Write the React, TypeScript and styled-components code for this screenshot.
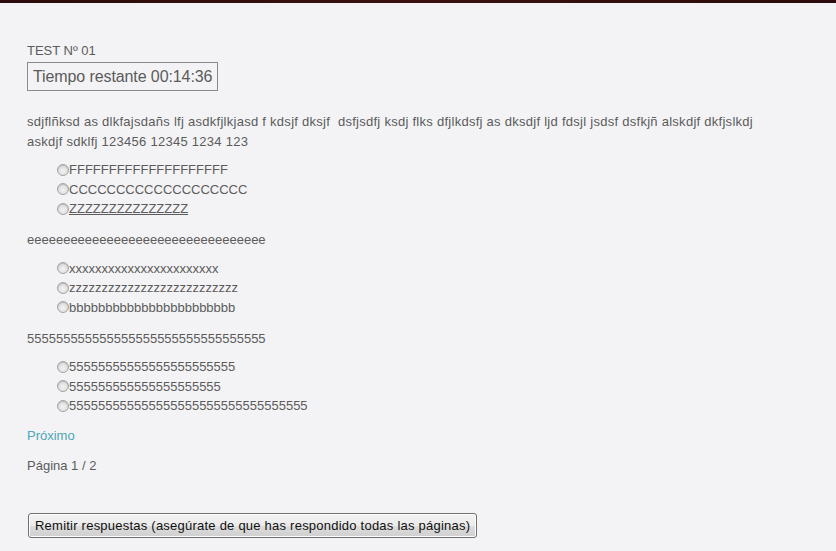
import React from 'react'
import styled, { createGlobalStyle } from 'styled-components'

const GlobalStyle = createGlobalStyle`
  html, body {
    margin: 0;
    padding: 0;
    background: #f3f3f5;
  }
  body {
    font-family: 'Liberation Sans', Arial, sans-serif;
    color: #5b5b5b;
  }
`

const TopBar = styled.div`
  height: 3px;
  background: linear-gradient(90deg, #2b0b0b, #3a1010 50%, #2b0b0b);
`

const Page = styled.div`
  padding: 40px 27px 12px 27px;
  width: 730px;
`

const Title = styled.div`
  font-size: 13px;
  line-height: 15px;
`

const Timer = styled.div`
  display: inline-block;
  margin-top: 4px;
  border: 1px solid #8a8a8a;
  padding: 4px 5px;
  font-size: 16px;
  line-height: 19px;
  letter-spacing: -0.1px;
`

const Question = styled.div<{ $first?: boolean }>`
  margin-top: ${({ $first }) => ($first ? '21px' : '11.5px')};
`

const Statement = styled.p<{ $spacing?: number }>`
  margin: 0;
  font-size: 13px;
  line-height: 19.5px;
  letter-spacing: ${({ $spacing }) => ($spacing ? $spacing + 'px' : 'normal')};
`

const OptionList = styled.ul`
  list-style: none;
  margin: 9px 0 0 0;
  padding: 0 0 0 30px;
`

const Option = styled.li`
  display: flex;
  align-items: center;
  font-size: 13px;
  line-height: 19.5px;
`

const Radio = styled.input.attrs({ type: 'radio' })`
  appearance: none;
  box-sizing: border-box;
  width: 12px;
  height: 12px;
  margin: 0;
  border-radius: 50%;
  border: 1px solid #a4a4a4;
  background: radial-gradient(circle at 50% 60%, #f2f2f2 0%, #dcdcdc 70%, #c8c8c8 100%);
  box-shadow: inset 0 1px 1px rgba(0, 0, 0, 0.15);
`

const OptionText = styled.span<{ $hover?: boolean }>`
  text-decoration: ${({ $hover }) => ($hover ? 'underline' : 'none')};
`

const NextLink = styled.a`
  display: block;
  margin-top: 10.5px;
  font-size: 13px;
  line-height: 19.5px;
  color: #4ba6b8;
  text-decoration: none;
`

const PageInfo = styled.div`
  margin-top: 10.5px;
  font-size: 13px;
  line-height: 19.5px;
`

const SubmitButton = styled.button`
  margin-top: 37px;
  margin-left: 1px;
  height: 25px;
  padding: 0 6px;
  font-family: 'Liberation Sans', Arial, sans-serif;
  font-size: 13px;
  letter-spacing: 0.23px;
  color: #111;
  border: 1px solid #707070;
  border-radius: 3px;
  background: linear-gradient(#f2f2f2 0%, #ebebeb 50%, #dddddd 51%, #cfcfcf 100%);
  box-shadow: inset 0 0 0 1px #fcfcfc;
  white-space: nowrap;
`

const questions = [
  {
    text: 'sdjflñksd as dlkfajsdañs lfj asdkfjlkjasd f kdsjf dksjf \u00a0dsfjsdfj ksdj flks dfjlkdsfj as dksdjf ljd fdsjl jsdsf dsfkjñ alskdjf dkfjslkdj askdjf sdklfj 123456 12345 1234 123',
    spacing: 0.27,
    options: ['FFFFFFFFFFFFFFFFFFFF', 'CCCCCCCCCCCCCCCCCCC', 'ZZZZZZZZZZZZZZZ'],
    hover: 2
  },
  {
    text: 'eeeeeeeeeeeeeeeeeeeeeeeeeeeeeeeee',
    spacing: 0,
    options: ['xxxxxxxxxxxxxxxxxxxxxxx', 'zzzzzzzzzzzzzzzzzzzzzzzzzz', 'bbbbbbbbbbbbbbbbbbbbbbb'],
    hover: -1
  },
  {
    text: '555555555555555555555555555555555',
    spacing: 0,
    options: ['55555555555555555555555', '555555555555555555555', '555555555555555555555555555555555'],
    hover: -1
  }
]

export default function App() {
  return (
    <>
      <GlobalStyle />
      <TopBar />
      <Page>
        <Title>TEST Nº 01</Title>
        <Timer>Tiempo restante 00:14:36</Timer>
        {questions.map((q, qi) => (
          <Question key={qi} $first={qi === 0}>
            <Statement $spacing={q.spacing}>{q.text}</Statement>
            <OptionList>
              {q.options.map((opt, oi) => (
                <Option key={oi}>
                  <Radio name={'q' + qi} />
                  <OptionText $hover={q.hover === oi}>{opt}</OptionText>
                </Option>
              ))}
            </OptionList>
          </Question>
        ))}
        <NextLink href="#">Próximo</NextLink>
        <PageInfo>Página 1 / 2</PageInfo>
        <SubmitButton>Remitir respuestas (asegúrate de que has respondido todas las páginas)</SubmitButton>
      </Page>
    </>
  )
}
